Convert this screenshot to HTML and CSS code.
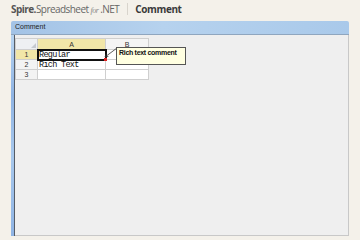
FILE: index.html
```html
<!DOCTYPE html>
<html>
<head>
<meta charset="utf-8">
<link rel="stylesheet" href="styles.css">
</head>
<body>
<div class="page">
  <div class="topbar">
    <span class="brand"><b>Spire.</b>Spreadsheet <i class="for">for</i> .NET</span>
    <span class="sep"></span>
    <span class="pagetitle">Comment</span>
  </div>
  <div class="window">
    <div class="titlebar">Comment</div>
    <div class="body">
      <div class="frame-left"></div>
      <div class="content">
        <div class="sheet">
          <table class="grid">
            <tr class="hdr">
              <td class="corner"><span class="tri"></span></td>
              <td class="colh sel">A</td>
              <td class="colh colb">B</td>
            </tr>
            <tr>
              <td class="rowh sel">1</td>
              <td class="cell active"><span class="txt">Regular</span><span class="dot"></span></td>
              <td class="cell"></td>
            </tr>
            <tr>
              <td class="rowh">2</td>
              <td class="cell"><span class="txt">Rich Text</span></td>
              <td class="cell"></td>
            </tr>
            <tr>
              <td class="rowh">3</td>
              <td class="cell"></td>
              <td class="cell"></td>
            </tr>
          </table>
          <svg class="arrow" width="14" height="11" viewBox="0 0 14 11">
            <line x1="1" y1="10" x2="13" y2="1" stroke="#333" stroke-width="0.8"/>
            <path d="M1 10 L2.3 6.8 M1 10 L4.4 9.4" stroke="#333" stroke-width="0.8" fill="none"/>
          </svg>
          <div class="comment">Rich text comment</div>
        </div>
      </div>
    </div>
  </div>
</div>
</body>
</html>
```
FILE: styles.css
```css
html, body {
  margin: 0;
  padding: 0;
  background: #f4f1ea;
}
.page {
  width: 360px;
  height: 240px;
  overflow: hidden;
  background: #f4f1ea;
}
.topbar {
  height: 21px;
  display: flex;
  align-items: center;
  padding-left: 11px;
  font-family: "Open Sans", "Liberation Sans", sans-serif;
  font-size: 10px;
  color: #666;
  box-sizing: border-box;
  padding-bottom: 3px;
}
.brand b { font-weight: 700; color: #555; }
.brand { letter-spacing: -0.55px; }
.for {
  font-family: "Liberation Serif", serif;
  font-size: 8px;
  color: #888;
}
.sep {
  width: 1px;
  height: 12px;
  background: #d8d4cc;
  margin: 0 7px 0 8px;
}
.pagetitle {
  font-weight: 700;
  color: #3a3a3a;
  letter-spacing: -0.4px;
}
.window {
  margin-left: 11px;
  width: 338px;
  height: 215px;
  display: flex;
  flex-direction: column;
}
.titlebar {
  height: 13px;
  background: linear-gradient(90deg, #a3c3e6 0%, #b6d2ee 45%, #a9c9ea 100%);
  border-bottom: 1px solid #8fa6bf;
  font-family: "Liberation Sans", sans-serif;
  font-size: 7px;
  line-height: 12px;
  color: #222;
  padding-left: 4px;
  border-radius: 2px 2px 0 0;
}
.body {
  flex: 1;
  display: flex;
}
.frame-left {
  width: 3px;
  background: linear-gradient(180deg, #b8d4f0 0%, #8fb4e4 30%, #a8c8ec 60%, #8fb4e4 100%);
  border-right: 1px solid #555c66;
}
.content {
  flex: 1;
  background: #efefef;
  border-right: 1px solid #c8c8c8;
  border-bottom: 1px solid #c8c8c8;
}
.sheet {
  position: relative;
  padding-top: 3px;
}
.grid {
  border-collapse: collapse;
  background: #fff;
  table-layout: fixed;
}
.grid td {
  border: 1px solid #cfcfcf;
  padding: 0;
  height: 9px;
  font-size: 7px;
  font-family: "Liberation Sans", sans-serif;
  color: #333;
  text-align: center;
  line-height: 9px;
  overflow: visible;
}
.grid tr.hdr td { height: 10px; }
.corner {
  width: 21px;
  background: #eef0f3;
  position: relative;
}
.tri {
  position: absolute;
  right: 1px;
  bottom: 1px;
  width: 0;
  height: 0;
  border-left: 5px solid transparent;
  border-bottom: 5px solid #c6cad0;
}
.colh { background: #f4f4f4; }
.colh.sel { background: #f1e6a8; width: 67px; }
.colb { width: 42px; }
.rowh { background: #f3f3f3; }
.rowh.sel { background: #f1e6a8; }
.grid td.cell {
  text-align: left;
  padding-left: 1px;
  position: relative;
  white-space: nowrap;
}
.txt {
  display: block;
  height: 9px;
  font-family: "Liberation Mono", monospace;
  font-size: 8.5px;
  letter-spacing: -0.7px;
  line-height: 10px;
  color: #111;
}
.grid td.active {
  outline: 2px solid #111;
  outline-offset: -1px;
}
.dot {
  position: absolute;
  right: -2px;
  bottom: -2px;
  width: 3px;
  height: 3px;
  background: #d22;
}
.arrow {
  position: absolute;
  left: 89px;
  top: 12px;
}
.comment {
  position: absolute;
  left: 101px;
  top: 12px;
  width: 70px;
  height: 18px;
  background: #ffffe1;
  border: 1px solid #555;
  font-family: "Liberation Sans", sans-serif;
  font-weight: 700;
  font-size: 7px;
  letter-spacing: -0.3px;
  color: #111;
  padding: 1px 0 0 2px;
  box-sizing: border-box;
  line-height: 8px;
}
```
